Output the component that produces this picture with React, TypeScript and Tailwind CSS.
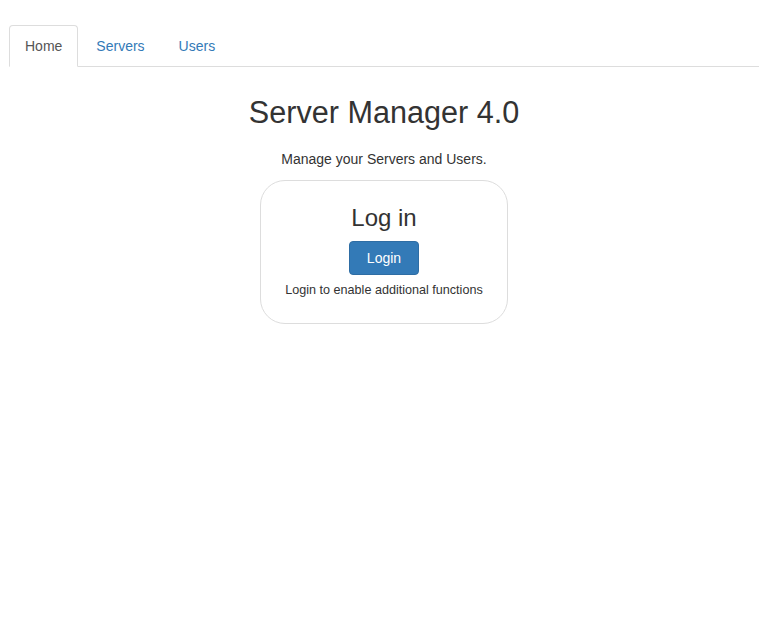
import React from 'react';

const tabs = [
  { label: 'Home', active: true },
  { label: 'Servers', active: false },
  { label: 'Users', active: false },
];

const App = () => {
  return (
    <div className="min-h-screen bg-white font-['Liberation_Sans',Arial,sans-serif] text-[14px] leading-[20px] text-[#333]">
      <div className="mx-auto w-[750px] pt-[25px]">
        <ul className="flex border-b border-[#ddd]">
          {tabs.map((t) => (
            <li key={t.label} className="-mb-px mr-[2px]">
              <a
                href="#"
                className={
                  t.active
                    ? 'block rounded-t-[4px] border border-[#ddd] border-b-transparent bg-white px-[15px] py-[10px] leading-[20px] text-[#555]'
                    : 'block rounded-t-[4px] border border-transparent px-[15px] py-[10px] leading-[20px] text-[#337ab7]'
                }
              >
                {t.label}
              </a>
            </li>
          ))}
        </ul>
      </div>

      <div className="flex flex-col items-center text-center">
        <h2 className="mt-[29px] text-[30.6px] leading-[33px] font-normal">Server Manager 4.0</h2>
        <p className="mt-[20px]">Manage your Servers and Users.</p>

        <div className="mt-[11px] flex w-[248px] flex-col items-center rounded-[25px] border border-[#ddd] pt-[24px] pb-[24px]">
          <h3 className="text-[24px] leading-[26px] font-normal">Log in</h3>
          <button
            type="button"
            className="mt-[10px] rounded-[4px] border border-[#2e6da4] bg-[#337ab7] px-[17px] py-[6px] leading-[20px] text-white"
          >
            Login
          </button>
          <p className="mt-[6px] text-[12.6px] leading-[18px]">Login to enable additional functions</p>
        </div>
      </div>
    </div>
  );
};

export default App;
